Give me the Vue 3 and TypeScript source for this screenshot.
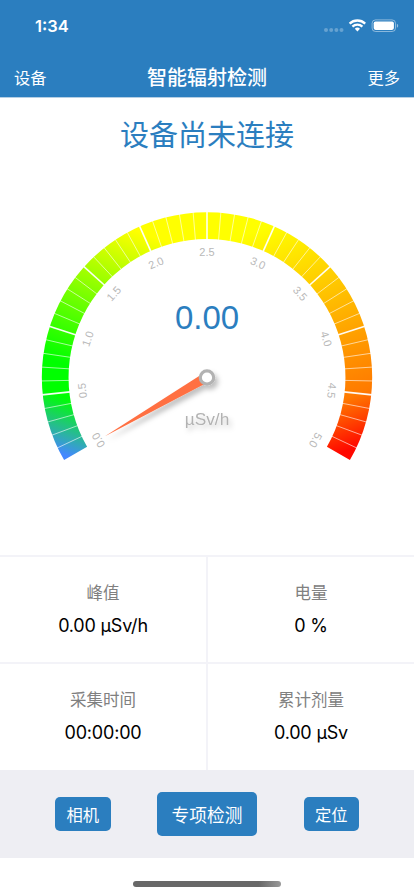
<script setup lang="ts">
interface Tick {
  index: number
  x1: number
  y1: number
  x2: number
  y2: number
  major: boolean
}
interface Scale {
  text: string
  angle: number
}
interface Reading {
  label: string
  value: string
  kind: string
}

const rad = (deg: number): number => (deg * Math.PI) / 180

const ticks: Tick[] = Array.from({ length: 49 }, (_, i) => {
  const a = rad(-120 + (i + 1) * 4.8)
  return {
    index: i,
    x1: 137.5 * Math.sin(a),
    y1: -137.5 * Math.cos(a),
    x2: 166 * Math.sin(a),
    y2: -166 * Math.cos(a),
    major: (i + 1) % 5 === 0,
  }
})

const scales: Scale[] = Array.from({ length: 11 }, (_, i) => ({
  text: (i * 0.5).toFixed(1),
  angle: -120 + i * 24,
}))

const readings: Reading[] = [
  { label: '峰值', value: '0.00 µSv/h', kind: 'peak' },
  { label: '电量', value: '0 %', kind: 'battery' },
  { label: '采集时间', value: '00:00:00', kind: 'time' },
  { label: '累计剂量', value: '0.00 µSv', kind: 'dose' },
]
</script>

<template>
  <div class="screen">
    <header class="header">
      <div class="status">
        <span class="clock">1:34</span>
        <svg class="status-icons" width="76" height="16" viewBox="0 0 76 16">
          <g fill="#fff" fill-opacity="0.28">
            <circle cx="3" cy="11.9" r="2" />
            <circle cx="8.2" cy="11.9" r="2" />
            <circle cx="13.4" cy="11.9" r="2" />
            <circle cx="18.5" cy="11.9" r="2" />
          </g>
          <g fill="none" stroke="#fff" stroke-width="2.3">
            <path d="M26.6 5.6a11.4 11.4 0 0 1 15.6 0" />
            <path d="M29.4 8.6a7.3 7.3 0 0 1 10 0" />
          </g>
          <path d="M34.4 13.4l-2.6-2.6a3.8 3.8 0 0 1 5.2 0z" fill="#fff" />
          <rect x="49.1" y="1.9" width="23.4" height="11.6" rx="3.4" fill="none" stroke="#fff" stroke-opacity="0.45" />
          <rect x="50.7" y="3.5" width="20.2" height="8.4" rx="1.8" fill="#fff" />
          <path d="M73.9 5.7c1.7.7 1.7 3.3 0 4z" fill="#fff" fill-opacity="0.5" />
        </svg>
      </div>
      <nav class="nav">
        <span class="nav-item">设备</span>
        <h1 class="title">智能辐射检测</h1>
        <span class="nav-item right">更多</span>
      </nav>
    </header>

    <main class="monitor">
      <h2 class="connection">设备尚未连接</h2>
      <svg class="gauge" width="414" height="270" viewBox="-207 -177.5 414 270">
        <defs>
          <linearGradient id="low" gradientUnits="userSpaceOnUse" x1="-145" y1="82" x2="-55" y2="-160">
            <stop offset="0.02" stop-color="#4488ff" />
            <stop offset="0.23" stop-color="#00ff00" />
            <stop offset="0.35" stop-color="#00ff00" />
            <stop offset="0.93" stop-color="#ffff00" />
          </linearGradient>
          <linearGradient id="high" gradientUnits="userSpaceOnUse" x1="55" y1="-160" x2="145" y2="82">
            <stop offset="0.04" stop-color="#ffff00" />
            <stop offset="0.63" stop-color="#ff9000" />
            <stop offset="0.77" stop-color="#ff7a00" />
            <stop offset="0.96" stop-color="#ff0800" />
          </linearGradient>
          <filter id="needle-shade" x="-30%" y="-60%" width="160%" height="250%">
            <feDropShadow dx="3" dy="4" stdDeviation="2.8" flood-color="#000" flood-opacity="0.25" />
          </filter>
          <filter id="unit-shade" x="-30%" y="-60%" width="160%" height="250%">
            <feDropShadow dx="2.5" dy="3.5" stdDeviation="2.6" flood-color="#000" flood-opacity="0.2" />
          </filter>
        </defs>
        <path d="M-142.9 82.5A165 165 0 0 1 0 -165.3V-138.5A138.5 138.5 0 0 0 -119.9 69.25Z" fill="url(#low)" />
        <path d="M0 -165.3A165 165 0 0 1 142.9 82.5L119.9 69.25A138.5 138.5 0 0 0 0 -138.5Z" fill="url(#high)" />
        <line
          v-for="t in ticks"
          :key="t.index"
          :x1="t.x1"
          :y1="t.y1"
          :x2="t.x2"
          :y2="t.y2"
          :class="['tick', { major: t.major }]"
        />
        <text
          v-for="s in scales"
          :key="s.text"
          class="scale"
          :transform="`rotate(${s.angle})`"
          x="0"
          y="-121.5"
        >{{ s.text }}</text>
        <text class="reading" x="0" y="-49">0.00</text>
        <text class="unit" x="0" y="47.5" filter="url(#unit-shade)">µSv/h</text>
        <g filter="url(#needle-shade)">
          <path d="M-102.5 59L-3.2 -4.5L1.8 4.2Z" fill="#ff7043" />
          <circle r="6.7" fill="#fff" stroke="#b2b2b2" stroke-width="3.2" />
        </g>
      </svg>
    </main>

    <section class="readings">
      <div v-for="r in readings" :key="r.kind" class="cell">
        <span class="label">{{ r.label }}</span>
        <span :class="['value', r.kind]">{{ r.value }}</span>
      </div>
    </section>

    <footer class="actions">
      <button class="action">相机</button>
      <button class="action primary">专项检测</button>
      <button class="action">定位</button>
    </footer>
    <div class="home"><span class="home-bar"></span></div>
  </div>
</template>

<style>
body {
  background: #fff;
}
</style>

<style scoped>
.screen {
  display: flex;
  flex-direction: column;
  width: 414px;
  height: 896px;
  overflow: hidden;
  background: #fff;
  font-family: Inter, "Noto Sans CJK SC", sans-serif;
}
.header {
  height: 98px;
  flex: none;
  background: #2b7ebf;
  border-bottom: 1px solid #b5cfe4;
  box-sizing: border-box;
  color: #fff;
}
.status {
  display: flex;
  justify-content: space-between;
  align-items: center;
  height: 51px;
  padding: 0 15px 0 35px;
}
.clock {
  font-size: 16.5px;
  font-weight: 600;
  line-height: 20px;
}
.status-icons {
  display: block;
}
.nav {
  display: grid;
  grid-template-columns: 1fr auto 1fr;
  align-items: center;
  height: 53px;
  padding: 0 14px;
}
.nav-item {
  font-size: 16.3px;
  line-height: 24px;
  font-weight: 400;
}
.right {
  text-align: right;
}
.title {
  margin: 1px 0 0;
  font-size: 20px;
  line-height: 28px;
  font-weight: 500;
}
.monitor {
  display: flex;
  flex-direction: column;
  align-items: center;
  height: 457px;
  flex: none;
}
.connection {
  margin: 17px 0 0;
  height: 85px;
  color: #2b7ebf;
  font-size: 29px;
  line-height: 42px;
  font-weight: 400;
}
.gauge {
  display: block;
}
.tick {
  stroke: #fff;
  stroke-opacity: 0.6;
  stroke-width: 1;
}
.tick.major {
  stroke-opacity: 0.95;
  stroke-width: 1.6;
}
.scale {
  font: 11px "Liberation Sans", sans-serif;
  fill: #b8b8b8;
  text-anchor: middle;
}
.reading {
  font: 33px "Liberation Sans", sans-serif;
  fill: #2b7ebf;
  text-anchor: middle;
}
.unit {
  font: 17.3px "Liberation Sans", sans-serif;
  fill: #b2b2b2;
  text-anchor: middle;
}
.readings {
  display: grid;
  grid-template-columns: 206px 206px;
  grid-template-rows: 105px 106px;
  gap: 2px;
  padding-top: 2px;
  background: #f3f3f8;
  flex: none;
}
.cell {
  display: flex;
  flex-direction: column;
  align-items: center;
  padding-top: 24px;
  box-sizing: border-box;
  background: #fff;
}
.label {
  color: #808080;
  font-size: 16.5px;
  line-height: 24px;
  font-weight: 400;
}
.value {
  margin-top: 8px;
  color: #000;
  font-size: 18px;
  line-height: 26px;
  letter-spacing: -0.2px;
}
.actions {
  display: flex;
  align-items: center;
  justify-content: center;
  gap: 46.5px;
  height: 88px;
  flex: none;
  background: #eeeef3;
}
.action {
  width: 55.5px;
  height: 33.5px;
  padding: 0;
  border: 0;
  border-radius: 5px;
  background: #2b7ebf;
  color: #fff;
  font-family: inherit;
  font-size: 16.3px;
  font-weight: 400;
}
.primary {
  width: 100px;
  height: 44px;
  font-size: 17.7px;
}
.home {
  display: flex;
  justify-content: center;
  padding-top: 23px;
}
.home-bar {
  width: 148px;
  height: 6px;
  border-radius: 3px;
  background: linear-gradient(90deg, #686868, #686868 85%, #999);
}
</style>
